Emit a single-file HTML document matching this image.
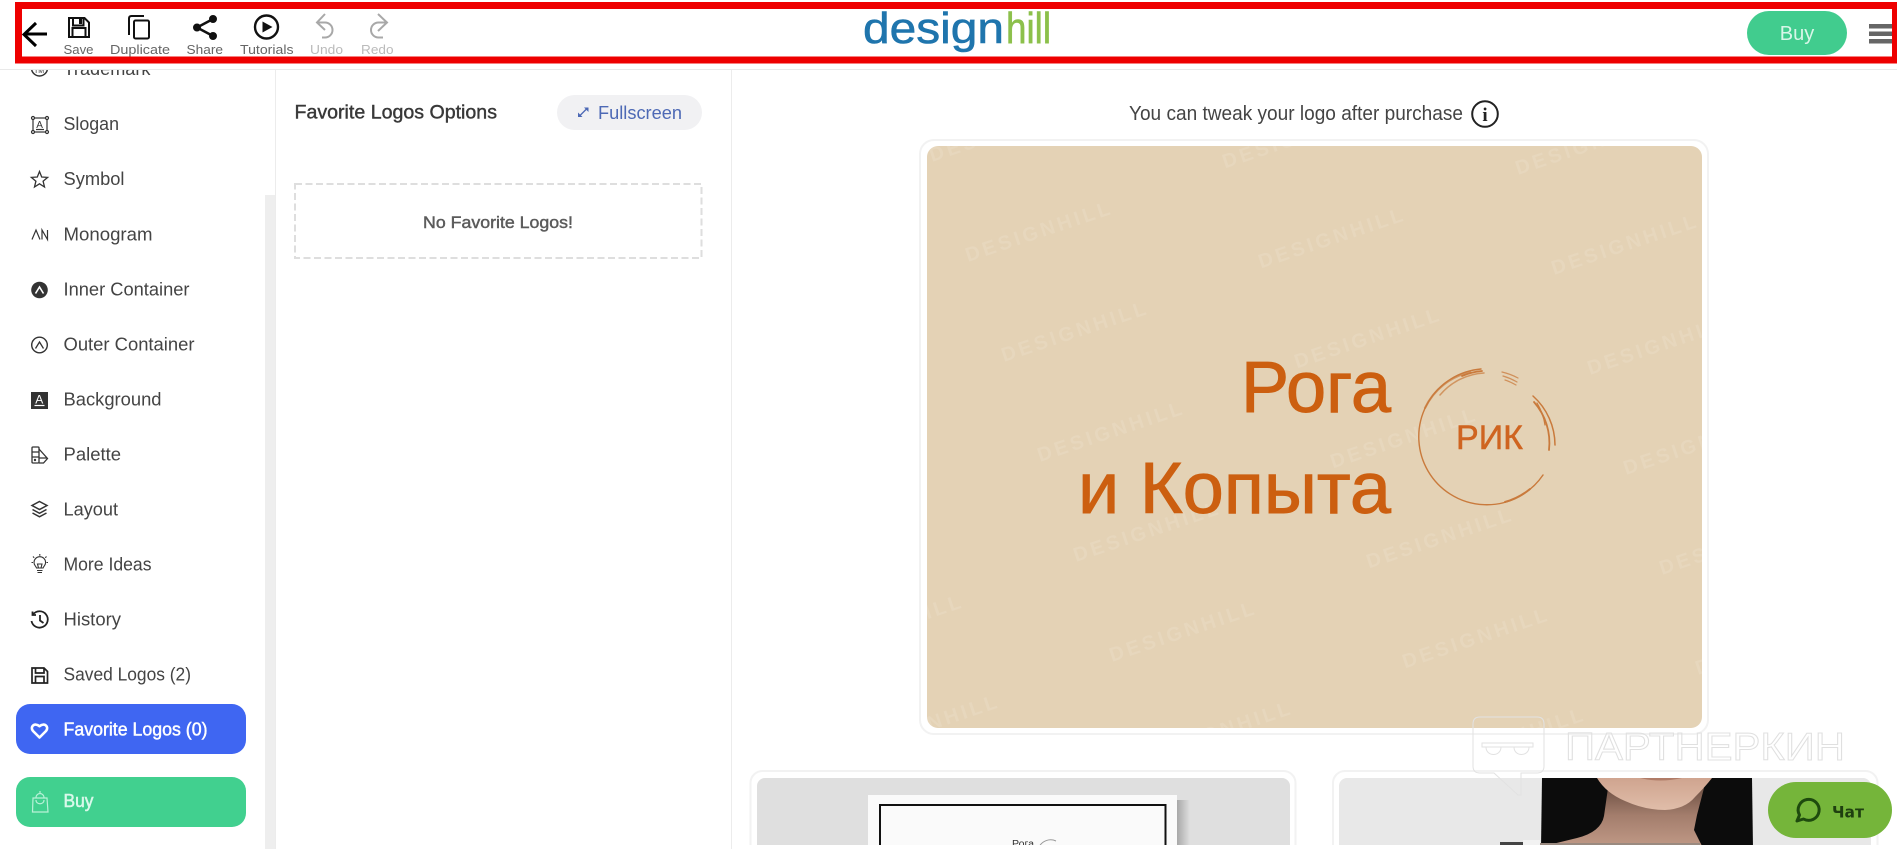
<!DOCTYPE html>
<html lang="en">
<head>
<meta charset="utf-8">
<title>Designhill Logo Maker</title>
<style>
html,body{margin:0;padding:0;background:#fff;width:1897px;height:849px;overflow:hidden}
svg{display:block}
text{font-family:"Liberation Sans","Noto Sans CJK SC",sans-serif}
.nav{font-size:18px;fill:#444}
.tb{font-size:13px;fill:#666}
.tbd{font-size:13px;fill:#bbb}
.wm{font-size:20px;font-weight:bold;fill:#fff;fill-opacity:.11}
</style>
</head>
<body>
<svg width="1897" height="849" viewBox="0 0 1897 849" xmlns="http://www.w3.org/2000/svg">
<defs>
<clipPath id="mainClip"><rect x="927" y="146" width="775" height="582" rx="11"/></clipPath>
<clipPath id="c1"><rect x="757" y="778" width="533" height="67"/></clipPath>
<clipPath id="c2"><rect x="1339" y="778" width="532" height="67"/></clipPath>
<linearGradient id="sh" x1="0" x2="1" y1="0" y2="0"><stop offset="0" stop-color="#a8a8a8"/><stop offset="1" stop-color="#dfdfdf"/></linearGradient>
<linearGradient id="skin" x1="0" x2="0" y1="0" y2="1"><stop offset="0" stop-color="#cfa48f"/><stop offset="1" stop-color="#e0bda9"/></linearGradient>
<linearGradient id="neck" x1="0" x2="0" y1="0" y2="1"><stop offset="0" stop-color="#6f5144"/><stop offset=".45" stop-color="#a37d6c"/><stop offset="1" stop-color="#c19a87"/></linearGradient>
</defs>
<rect width="1897" height="849" fill="#fff"/>

<!-- sidebar -->
<rect x="275" y="69" width="1" height="780" fill="#ececec"/>
<rect x="265" y="195" width="10" height="654" fill="#eeeeee"/>
<g class="sidebar">
<circle cx="39.5" cy="68" r="8" fill="none" stroke="#333" stroke-width="1.5"/>
<text x="34" y="73" font-size="7" fill="#333">TM</text>
<text class="nav" x="63.500" y="75" textLength="87" lengthAdjust="spacingAndGlyphs">Trademark</text>

<g fill="none" stroke="#333" stroke-width="1.2"><rect x="33" y="118" width="14" height="14"/><circle cx="33" cy="118" r="1.5" fill="#fff"/><circle cx="47" cy="118" r="1.5" fill="#fff"/><circle cx="33" cy="132" r="1.5" fill="#fff"/><circle cx="47" cy="132" r="1.5" fill="#fff"/><path d="M36 129.500h8"/></g>
<text x="36.200" y="128" font-size="10" fill="#333">A</text>
<text class="nav" x="63.500" y="130" textLength="55.500" lengthAdjust="spacingAndGlyphs">Slogan</text>

<polygon points="39.500,171.500 41.700,177 47.600,177.400 43.100,181.200 44.500,187 39.500,183.800 34.500,187 35.900,181.200 31.400,177.400 37.300,177" fill="none" stroke="#333" stroke-width="1.3"/>
<text class="nav" x="63.500" y="185" textLength="61" lengthAdjust="spacingAndGlyphs">Symbol</text>

<path d="M32 239.500l4-9.500 4 9.500M42 239.500v-9.500l5.500 9.500v-9.500" fill="none" stroke="#333" stroke-width="1.200"/>
<text class="nav" x="63.500" y="240.500" textLength="89" lengthAdjust="spacingAndGlyphs">Monogram</text>

<circle cx="39.500" cy="290" r="8.300" fill="#333"/><path d="M35.500 293.500l4-6.500 4 6.500" fill="none" stroke="#fff" stroke-width="1.600"/>
<text class="nav" x="63.500" y="295.500" textLength="126" lengthAdjust="spacingAndGlyphs">Inner Container</text>

<circle cx="39.500" cy="345" r="7.800" fill="none" stroke="#333" stroke-width="1.400"/><path d="M35.500 348.500l4-6.500 4 6.500" fill="none" stroke="#333" stroke-width="1.300"/>
<text class="nav" x="63.500" y="350.500" textLength="131" lengthAdjust="spacingAndGlyphs">Outer Container</text>

<rect x="31" y="392" width="17" height="17" fill="#333"/><text x="35.200" y="403.500" font-size="12" fill="#fff">A</text><path d="M34.500 405.500h10" stroke="#fff" stroke-width="1.200"/>
<text class="nav" x="63.500" y="405.500" textLength="98" lengthAdjust="spacingAndGlyphs">Background</text>

<g fill="none" stroke="#333" stroke-width="1.300"><rect x="32" y="447" width="7" height="16" rx="1"/><path d="M32 452h7M32 457h7M39 449l8.500 9.500-4 4.500H39M39 458l8 0"/></g><circle cx="35" cy="460" r="1.200" fill="#333"/>
<text class="nav" x="63.500" y="460.500" textLength="57.500" lengthAdjust="spacingAndGlyphs">Palette</text>

<g fill="none" stroke="#333" stroke-width="1.500"><path d="M39.500 501.500l7.500 4-7.500 4-7.500-4z"/><path d="M32.500 509.500l7 3.800 7-3.800M32.500 513l7 3.800 7-3.800"/></g>
<text class="nav" x="63.500" y="515.500" textLength="54.500" lengthAdjust="spacingAndGlyphs">Layout</text>

<g fill="none" stroke="#333" stroke-width="1.100"><path d="M36.500 568c-.5-2-2.500-2.500-2.500-5.500a5.800 5.800 0 0 1 11.600 0c0 3-2 3.500-2.500 5.500z"/><path d="M37 570.500h5.500M37.500 572.500h4.500M38.500 568l-1-4h4.500l-1 4"/><path d="M39.800 554v1.800M33 556.500l1.200 1.300M46.500 556.500l-1.200 1.300M31.500 562.500h1.500M46.500 562.500h1.500"/></g>
<text class="nav" x="63.500" y="570.500" textLength="88" lengthAdjust="spacingAndGlyphs">More Ideas</text>

<g fill="none" stroke="#222" stroke-width="1.800"><path d="M33 614.500a8.200 8.200 0 1 1-1.500 6.500"/><path d="M32.500 611.500v3.500h3.500"/><path d="M40 615v5.500l3.500 2.500"/></g>
<text class="nav" x="63.500" y="625.500" textLength="57.500" lengthAdjust="spacingAndGlyphs">History</text>

<g fill="none" stroke="#222" stroke-width="1.700"><path d="M32 668h12l3.500 3.500V683H32z"/><path d="M35.500 668v5h8.500v-5M35.500 683v-6.500h8.500V683"/></g>
<text class="nav" x="63.500" y="680.500" textLength="127.500" lengthAdjust="spacingAndGlyphs">Saved Logos (2)</text>

<rect x="16" y="704" width="230" height="50" rx="14" fill="#3f66f2"/>
<path d="M39.500 737.500l-6.500-6.500c-3.500-4 1.500-9 6.500-4.800 5-4.200 10 .8 6.500 4.800z" fill="none" stroke="#fff" stroke-width="2.600" stroke-linejoin="round"/>
<text x="63.500" y="735.500" font-size="18" fill="#fff" stroke="#fff" stroke-width=".45" textLength="144" lengthAdjust="spacingAndGlyphs">Favorite Logos (0)</text>

<rect x="16" y="777" width="230" height="50" rx="14" fill="#41d08f"/>
<g fill="none" stroke="#b9f1d8" stroke-width="1.200"><path d="M33 798h14l1 14H32.500z"/><path d="M36 798c0-6 8-6 8 0M36 800c0 5 8 5 8 0M40 793v-2"/></g>
<text x="63.500" y="807" font-size="18" fill="#d9f8ea" stroke="#d9f8ea" stroke-width=".5" textLength="30" lengthAdjust="spacingAndGlyphs">Buy</text>
</g>

<!-- middle panel -->
<rect x="731" y="69" width="1" height="780" fill="#ececec"/>
<text x="294.500" y="118.500" font-size="19" fill="#383838" stroke="#383838" stroke-width=".4" textLength="202.500" lengthAdjust="spacingAndGlyphs">Favorite Logos Options</text>
<rect x="557" y="95" width="145" height="35" rx="17.500" fill="#f1f1f3"/>
<g stroke="#4d69b5" stroke-width="1.300" fill="#4d69b5"><path d="M579.500 116l7.500-7.500"/><path d="M584 107.500h4.500v4.500z" stroke="none"/><path d="M578 112.500v4.500h4.500z" stroke="none"/></g>
<text x="598" y="119" font-size="18" fill="#4d69b5" textLength="84" lengthAdjust="spacingAndGlyphs">Fullscreen</text>
<rect x="295" y="184" width="406.500" height="74" fill="none" stroke="#dedede" stroke-width="2" stroke-dasharray="7 3.500"/>
<text x="423" y="228" font-size="17" fill="#5b5b5b" stroke="#5b5b5b" stroke-width=".45" textLength="150" lengthAdjust="spacingAndGlyphs">No Favorite Logos!</text>

<!-- main panel -->
<text x="1129" y="120" font-size="20" fill="#444" textLength="334" lengthAdjust="spacingAndGlyphs">You can tweak your logo after purchase</text>
<circle cx="1485" cy="114" r="12.800" fill="none" stroke="#222" stroke-width="2"/>
<text x="1485" y="121" font-size="19" font-weight="bold" text-anchor="middle" fill="#222" style="font-family:'Liberation Serif',serif">i</text>

<rect x="920" y="140" width="788" height="594" rx="14" fill="#fff" stroke="#f2f2f2" stroke-width="2"/>
<rect x="927" y="146" width="775" height="582" rx="11" fill="#e4d2b5"/>
<g clip-path="url(#mainClip)">
<text class="wm" transform="translate(932 162) rotate(-18.500)" textLength="151">DESIGNHILL</text>
<text class="wm" transform="translate(1225 168.500) rotate(-18.500)" textLength="151">DESIGNHILL</text>
<text class="wm" transform="translate(1518 175) rotate(-18.500)" textLength="151">DESIGNHILL</text>
<text class="wm" transform="translate(968 262) rotate(-18.500)" textLength="151">DESIGNHILL</text>
<text class="wm" transform="translate(1261 268.500) rotate(-18.500)" textLength="151">DESIGNHILL</text>
<text class="wm" transform="translate(1554 275) rotate(-18.500)" textLength="151">DESIGNHILL</text>
<text class="wm" transform="translate(1004 362) rotate(-18.500)" textLength="151">DESIGNHILL</text>
<text class="wm" transform="translate(1297 368.500) rotate(-18.500)" textLength="151">DESIGNHILL</text>
<text class="wm" transform="translate(1590 375) rotate(-18.500)" textLength="151">DESIGNHILL</text>
<text class="wm" transform="translate(1040 462) rotate(-18.500)" textLength="151">DESIGNHILL</text>
<text class="wm" transform="translate(1333 468.500) rotate(-18.500)" textLength="151">DESIGNHILL</text>
<text class="wm" transform="translate(1626 475) rotate(-18.500)" textLength="151">DESIGNHILL</text>
<text class="wm" transform="translate(1076 562) rotate(-18.500)" textLength="151">DESIGNHILL</text>
<text class="wm" transform="translate(1369 568.500) rotate(-18.500)" textLength="151">DESIGNHILL</text>
<text class="wm" transform="translate(1662 575) rotate(-18.500)" textLength="151">DESIGNHILL</text>
<text class="wm" transform="translate(819 655.500) rotate(-18.500)" textLength="151">DESIGNHILL</text>
<text class="wm" transform="translate(1112 662) rotate(-18.500)" textLength="151">DESIGNHILL</text>
<text class="wm" transform="translate(1405 668.500) rotate(-18.500)" textLength="151">DESIGNHILL</text>
<text class="wm" transform="translate(1698 675) rotate(-18.500)" textLength="151">DESIGNHILL</text>
<text class="wm" transform="translate(855 755.500) rotate(-18.500)" textLength="151">DESIGNHILL</text>
<text class="wm" transform="translate(1148 762) rotate(-18.500)" textLength="151">DESIGNHILL</text>
<text class="wm" transform="translate(1441 768.500) rotate(-18.500)" textLength="151">DESIGNHILL</text>
</g>

<!-- logo -->
<text x="1241" y="412" font-size="72" fill="#cc5f10" stroke="#cc5f10" stroke-width=".9" textLength="150" lengthAdjust="spacingAndGlyphs">Рога</text>
<text x="1078" y="513" font-size="72" fill="#cc5f10" stroke="#cc5f10" stroke-width=".9" textLength="313" lengthAdjust="spacingAndGlyphs">и Копыта</text>
<text x="1456" y="449" font-size="34" fill="#cf6420" stroke="#cf6420" stroke-width=".5" textLength="67" lengthAdjust="spacingAndGlyphs">РИК</text>
<g fill="none" stroke="#c97a3c" stroke-linecap="round">
<path d="M1543 475A68 68 0 1 1 1481 369" stroke-width="1.400"/>
<path d="M1530 489A68 68 0 0 1 1505 502" stroke-width="2"/>
<path d="M1425 408A66 66 0 0 1 1470 372" stroke-width="2.200" stroke-opacity=".7"/>
<path d="M1440 395A62 62 0 0 1 1484 373" stroke-width="1.500" stroke-opacity=".7"/>
<path d="M1462 376A66 66 0 0 1 1482 371" stroke-width="1.800"/>
<path d="M1502 372A66 66 0 0 1 1518 378M1503 376A63 63 0 0 1 1517 382M1505 380A60 60 0 0 1 1516 385" stroke-width="1.200" stroke-opacity=".75"/>
<path d="M1533 396A66 66 0 0 1 1555 445" stroke-width="1.500"/>
<path d="M1534 402A62 62 0 0 1 1549 450" stroke-width="1.800"/>
<path d="M1537 403A60 60 0 0 1 1545 425" stroke-width="1.200"/>
</g>

<!-- lower left card -->
<rect x="750.500" y="771" width="545" height="90" rx="12" fill="#fff" stroke="#f2f2f2" stroke-width="2"/>
<rect x="757" y="778" width="533" height="80" rx="8" fill="#dfdfdf"/>
<g clip-path="url(#c1)">
<rect x="1177" y="800" width="13" height="60" fill="url(#sh)"/>
<rect x="868" y="795" width="309" height="60" fill="#fafafa"/>
<rect x="880" y="805" width="285.500" height="60" fill="none" stroke="#111" stroke-width="2"/>
<text x="1012" y="847" font-size="10" fill="#333" textLength="22" lengthAdjust="spacingAndGlyphs">Рога</text>
<path d="M1039 847a13 13 0 0 1 17-6" fill="none" stroke="#999"/>
</g>

<!-- lower right card -->
<rect x="1333" y="771" width="544.500" height="90" rx="12" fill="#fff" stroke="#f2f2f2" stroke-width="2"/>
<rect x="1339" y="778" width="532" height="80" rx="8" fill="#e8e8e8"/>
<g clip-path="url(#c2)">
<rect x="1500" y="842" width="23" height="5" fill="#444"/>
<rect x="1523" y="840" width="17" height="7" fill="#f2f2f2"/>
<path d="M1542 778L1541 848H1753L1752 778z" fill="#0c0c0c"/>
<path d="M1608 788H1704L1697 815 1694 830 1703 848H1536L1577 838Q1601 832 1604 816Z" fill="url(#neck)"/>
<path d="M1597 778Q1606 793 1625 801Q1645 810 1665 810Q1685 809 1695 797Q1705 787 1712 778Z" fill="url(#skin)"/>
<path d="M1640 778Q1660 783 1682 778Z" fill="#b07c68"/>
<rect x="1540" y="843" width="160" height="3" fill="#9a8a80"/>
</g>

<!-- watermark -->
<g fill="none" stroke="#e2e2e2" stroke-width="1">
<path d="M1480 717H1537Q1544 717 1544 724V766Q1544 773 1537 773H1521V795H1518L1494 773H1480Q1473 773 1473 766V724Q1473 717 1480 717Z"/>
<path d="M1482 743H1533V747H1482ZM1486 747c0 10 15 10 15 0M1514 747c0 10 15 10 15 0"/>
</g>
<text x="1565" y="760" font-size="39" fill="none" stroke="#e0e0e0" stroke-width="1" textLength="280" lengthAdjust="spacingAndGlyphs">ПАРТНЕРКИН</text>

<!-- bottom cut -->
<rect x="732" y="845" width="1165" height="4" fill="#fff"/>

<!-- chat -->
<rect x="1768" y="782" width="124" height="56" rx="28" fill="#75b53a"/>
<path d="M1803.500 819A10.500 10.500 0 1 0 1799.500 815L1797 821Z" fill="none" stroke="#1e4a0e" stroke-width="3" stroke-linejoin="round"/>
<text x="1832" y="817.500" font-size="16" font-weight="bold" fill="#1f3f10" textLength="32" lengthAdjust="spacingAndGlyphs" style="font-family:'DejaVu Sans',sans-serif">Чат</text>

<!-- header -->
<rect x="0" y="0" width="1897" height="69" fill="#fff"/>
<rect x="0" y="69" width="1897" height="1" fill="#e9e9e9"/>
<rect x="18.500" y="5.500" width="1877" height="54.500" fill="none" stroke="#ee0000" stroke-width="7"/>

<path d="M47 34H24M36 23L24 34.500 36 46" fill="none" stroke="#000" stroke-width="3"/>

<g fill="none" stroke="#111" stroke-width="2">
<path d="M69 18h15.500l4.500 4.500V37H69z"/>
<path d="M73 18v7.500h10.500V18M72.500 37v-9h13v9"/>
</g>
<rect x="79" y="18.500" width="3" height="5.500" fill="#111"/>
<text class="tb" x="63.500" y="54" textLength="30" lengthAdjust="spacingAndGlyphs">Save</text>

<g fill="none" stroke="#111" stroke-width="2">
<path d="M144 16H131.500Q129 16 129 18.500V35"/>
<rect x="134" y="20.500" width="15" height="18" rx="1.500"/>
</g>
<text class="tb" x="110" y="54" textLength="60" lengthAdjust="spacingAndGlyphs">Duplicate</text>

<g fill="#111" stroke="#111">
<path d="M213 19L197 27.500 213 36" fill="none" stroke-width="2.500"/>
<circle cx="213" cy="19" r="3.500"/><circle cx="197" cy="27.500" r="3.500"/><circle cx="213" cy="36" r="3.500"/>
</g>
<text class="tb" x="186.500" y="54" textLength="36.500" lengthAdjust="spacingAndGlyphs">Share</text>

<circle cx="266.500" cy="27" r="11.500" fill="none" stroke="#111" stroke-width="2.400"/>
<path d="M262.500 21.500L272.500 27 262.500 32.500Z" fill="#111"/>
<text class="tb" x="240" y="54" textLength="53.500" lengthAdjust="spacingAndGlyphs">Tutorials</text>

<path d="M325 14L317 22.500 325 30M317 22.500H325A7.500 7.500 0 0 1 325 37.500H322" fill="none" stroke="#a8a8a8" stroke-width="2"/>
<text class="tbd" x="310" y="54" textLength="33" lengthAdjust="spacingAndGlyphs">Undo</text>

<path d="M378 14L387 22.500 378 31M387 22.500H378.500A7.500 7.500 0 0 0 378.500 37.500H383" fill="none" stroke="#a8a8a8" stroke-width="2"/>
<text class="tbd" x="361" y="54" textLength="32.500" lengthAdjust="spacingAndGlyphs">Redo</text>

<!-- brand -->
<text x="863" y="43" font-size="44" fill="#1f75ad" stroke="#1f75ad" stroke-width=".6" textLength="141" lengthAdjust="spacingAndGlyphs">design</text>
<text x="1006" y="43" font-size="44" fill="#8cc04b" stroke="#8cc04b" stroke-width=".6" textLength="45" lengthAdjust="spacingAndGlyphs">hill</text>

<rect x="1747" y="11" width="100" height="44" rx="22" fill="#41cc8e"/>
<text x="1797" y="40" font-size="20" text-anchor="middle" fill="#d8f6e8">Buy</text>
<g fill="#666"><rect x="1869" y="24" width="23" height="4.500"/><rect x="1869" y="31.500" width="23" height="4.500"/><rect x="1869" y="39" width="23" height="4.500"/></g>
</svg>
</body>
</html>
